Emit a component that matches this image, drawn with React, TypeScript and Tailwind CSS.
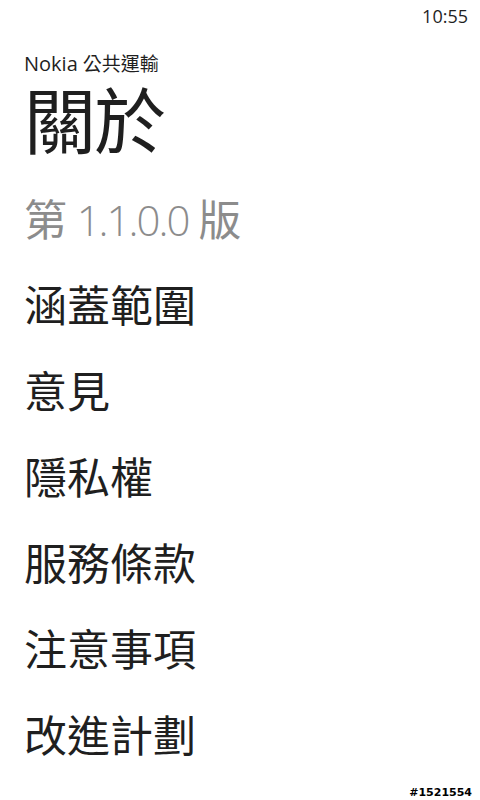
import React from "react";

const cjk = { fontFamily: '"Segoe UI", "Noto Sans CJK TC", "Noto Sans", sans-serif' };
const latin = { fontFamily: '"Open Sans", "Noto Sans", sans-serif' };

export default function App() {
  const items = ["涵蓋範圍", "意見", "隱私權", "服務條款", "注意事項", "改進計劃"];
  return (
    <div className="relative w-[480px] h-[800px] bg-white text-[#1f1f1f] overflow-hidden" style={cjk}>
      <div className="h-[32px] flex items-center justify-end pr-[12px] text-[18px] leading-none text-[#1f1f1f]" style={latin}>
        10:55
      </div>
      <div className="pl-[24px] flex flex-col">
        <div className="mt-[19px] h-[24px] flex items-baseline gap-[5px] text-[19px] leading-[24px] whitespace-nowrap">
          <span style={latin} className="text-[20px] leading-[24px]">Nokia</span>
          <span className="leading-[24px]">公共運輸</span>
        </div>
        <div className="mt-[6px] h-[72px] text-[72px] leading-[72px] font-normal tracking-[-2px]">關於</div>
        <div className="mt-[39px] h-[50px] text-[43px] leading-[50px] text-[#8c8c8c] whitespace-nowrap">
          第 <span style={latin} className="font-light text-[42px] tracking-[-2px]">1.1.0.0</span> 版
        </div>
        <div className="mt-[36px] flex flex-col">
          {items.map((t) => (
            <div key={t} className="h-[86px] text-[43px] leading-[50px]">
              {t}
            </div>
          ))}
        </div>
      </div>
      <div
        className="absolute right-[8px] bottom-[2px] text-[11px] font-bold text-black leading-none"
        style={{ fontFamily: '"DejaVu Sans", sans-serif', textShadow: "1px 0 #fff, -1px 0 #fff, 0 1px #fff, 0 -1px #fff" }}
      >
        #1521554
      </div>
    </div>
  );
}
